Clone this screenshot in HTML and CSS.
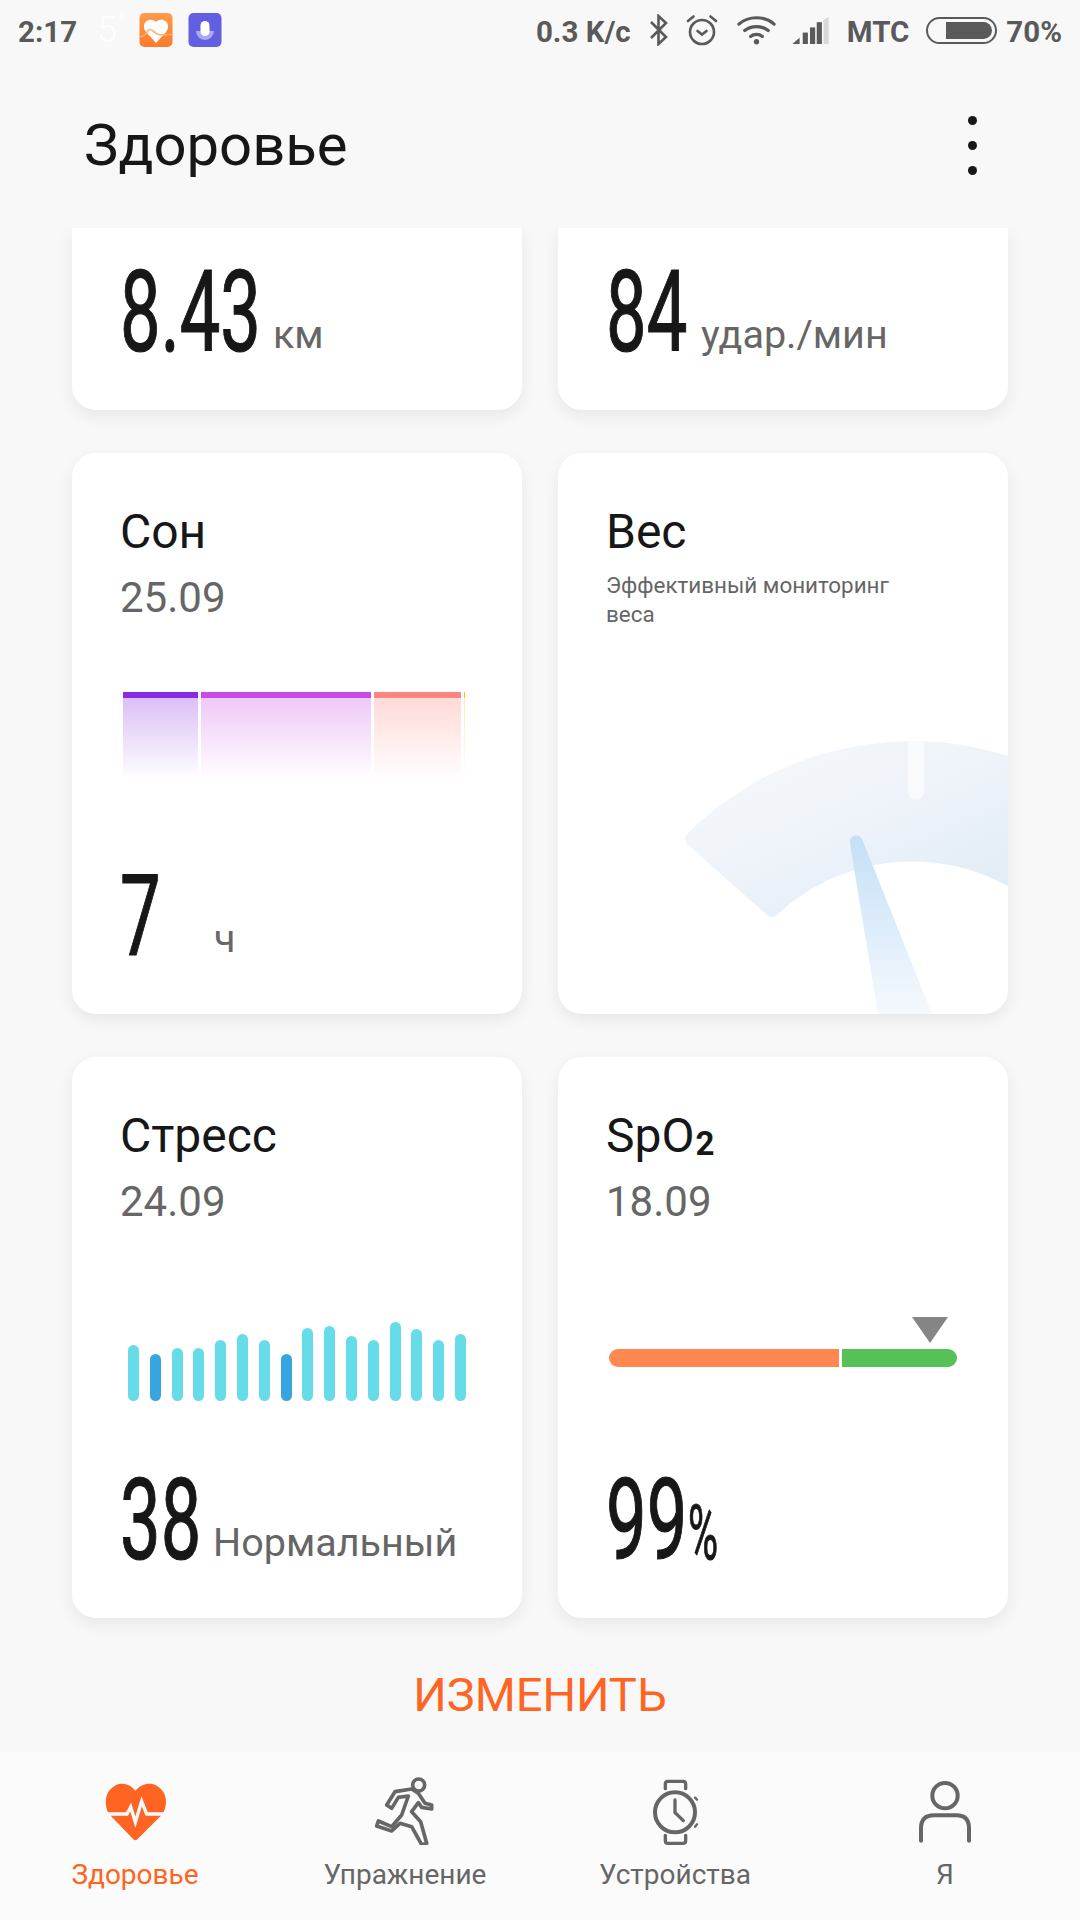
FILE: index.html
```html
<!DOCTYPE html>
<html lang="ru">
<head>
  <meta charset="UTF-8">
  <meta name="viewport" content="width=device-width, initial-scale=1.0">
  <title>Здоровье</title>
  <link rel="stylesheet" href="styles.css">
</head>
<body>
<div class="app">

  <!-- Status bar -->
  <div class="status-bar">
    <div class="status-left">
      <span class="status-text">2:17</span>
      <span class="status-weather">5<sup>°</sup></span>
      <svg class="app-icon first-icon" viewBox="0 0 33 34">
        <defs>
          <linearGradient id="appOrange" x1="0" y1="0" x2="0" y2="1">
            <stop offset="0" stop-color="#ff9a4d"/>
            <stop offset="1" stop-color="#ff7a2a"/>
          </linearGradient>
        </defs>
        <rect width="33" height="34" rx="5" fill="url(#appOrange)"/>
        <path d="M16.5 9C14 6 9 6 6.500 8.500C3.500 11.500 4 16 6.500 19L16.500 30L26.500 19C29 16 29.500 11.500 26.500 8.500C24 6 19 6 16.500 9Z" fill="#fff"/>
        <path d="M0 23C4 25 6 21 9 17C12 14 15 21 19 21.500C23 22 26 21.500 33 21.500" fill="none" stroke="#ffb070" stroke-width="1.500"/>
      </svg>
      <svg class="app-icon second-icon" viewBox="0 0 33 34">
        <rect width="33" height="34" rx="5" fill="#625fe0"/>
        <path d="M7.500 18A9 9 0 0 0 25.500 18Z" fill="#aca9f0"/>
        <rect x="12" y="8" width="9" height="15" rx="4.500" fill="#fff"/>
      </svg>
    </div>
    <div class="status-right">
      <span class="status-text">0.3 K/c</span>
      <svg class="bt-icon" viewBox="0 0 20 32" fill="none" stroke="#5a5a5a" stroke-width="2.600">
        <path d="M2 8L17 23L9.500 30V2L17 9L2 24"/>
      </svg>
      <svg class="alarm-icon" viewBox="0 0 32 32" fill="none" stroke="#5a5a5a" stroke-width="2.600" stroke-linecap="round">
        <circle cx="16" cy="18" r="12"/>
        <path d="M11.500 17L16 20.500L20.500 17"/>
        <path d="M2 7L7.500 2.500M30 7L24.500 2.500"/>
      </svg>
      <svg class="wifi-icon" viewBox="0 0 36 30" fill="none" stroke="#5a5a5a" stroke-width="3" stroke-linecap="round">
        <path d="M1.500 9.500C10.500 1.500 25.500 1.500 34.500 9.500"/>
        <path d="M7 15.500C13 10.500 23 10.500 29 15.500"/>
        <path d="M12.500 21C15.500 18.500 20.500 18.500 23.500 21"/>
        <circle cx="18" cy="26" r="2.500" fill="#5a5a5a" stroke="none"/>
      </svg>
      <svg class="signal-icon" viewBox="0 0 35 26">
        <path d="M0 26L7 20V26Z" fill="#5a5a5a"/>
        <rect x="10" y="15" width="5" height="11" fill="#5a5a5a"/>
        <rect x="17" y="10" width="5" height="16" fill="#5a5a5a"/>
        <rect x="23.500" y="5" width="5" height="21" fill="#5a5a5a"/>
        <path d="M30 3L35 0V26H30Z" fill="#d8d8d8"/>
      </svg>
      <span class="status-text carrier">МТС</span>
      <div class="battery"><div class="battery-fill"></div></div>
      <span class="status-text">70%</span>
    </div>
  </div>

  <!-- Header -->
  <div class="header">
    <h1>Здоровье</h1>
    <div class="more-button"><span></span><span></span><span></span></div>
  </div>

  <!-- Cards -->
  <div class="content">
    <div class="card-grid">

      <div class="card card-cut">
        <div class="value">
          <span class="num num-dist">8.43</span>
          <span class="unit">км</span>
        </div>
      </div>

      <div class="card card-cut">
        <div class="value">
          <span class="num num-pulse">84</span>
          <span class="unit">удар./мин</span>
        </div>
      </div>

      <div class="card">
        <div class="card-title">Сон</div>
        <div class="card-date">25.09</div>
        <div class="sleep-chart">
          <div class="sleep-part sleep-deep"></div>
          <div class="sleep-part sleep-light"></div>
          <div class="sleep-part sleep-rem"></div>
          <div class="sleep-part sleep-awake"></div>
        </div>
        <div class="value">
          <span class="num num-sleep">7</span>
          <span class="unit">ч</span>
        </div>
      </div>

      <div class="card">
        <div class="card-title">Вес</div>
        <div class="card-note">Эффективный мониторинг<br>веса</div>
        <svg class="gauge" viewBox="0 0 450 561">
          <defs>
            <linearGradient id="gaugeBand" x1="0.1" y1="0" x2="0.9" y2="0.8">
              <stop offset="0" stop-color="#f5f8fc"/>
              <stop offset="0.5" stop-color="#eef3f9"/>
              <stop offset="1" stop-color="#e1ecf5"/>
            </linearGradient>
            <linearGradient id="gaugeNeedle" x1="0" y1="0" x2="0" y2="1">
              <stop offset="0" stop-color="#c4dff7"/>
              <stop offset="1" stop-color="#f5f9fd"/>
            </linearGradient>
          </defs>
          <path d="M134 386A311 311 0 0 1 507.500 335.700L454.500 427.500A205 205 0 0 0 214 457Z" fill="url(#gaugeBand)" stroke="url(#gaugeBand)" stroke-width="14" stroke-linejoin="round"/>
          <path d="M350 287H366V339A8 8 0 0 1 350 339Z" fill="#fff" fill-opacity="0.55"/>
          <path d="M292 391A6.500 6.500 0 0 1 304.500 387L374 561H320Z" fill="url(#gaugeNeedle)"/>
        </svg>
      </div>

      <div class="card">
        <div class="card-title">Стресс</div>
        <div class="card-date">24.09</div>
        <div class="stress-chart">
          <div class="stress-bar" style="height:56px"></div>
          <div class="stress-bar stress-low" style="height:47px"></div>
          <div class="stress-bar" style="height:53px"></div>
          <div class="stress-bar" style="height:53px"></div>
          <div class="stress-bar" style="height:61px"></div>
          <div class="stress-bar" style="height:67px"></div>
          <div class="stress-bar" style="height:61px"></div>
          <div class="stress-bar stress-low" style="height:47px"></div>
          <div class="stress-bar" style="height:73px"></div>
          <div class="stress-bar" style="height:75px"></div>
          <div class="stress-bar" style="height:65px"></div>
          <div class="stress-bar" style="height:61px"></div>
          <div class="stress-bar" style="height:79px"></div>
          <div class="stress-bar" style="height:72px"></div>
          <div class="stress-bar" style="height:61px"></div>
          <div class="stress-bar" style="height:67px"></div>
        </div>
        <div class="value">
          <span class="num num-stress">38</span>
          <span class="unit">Нормальный</span>
        </div>
      </div>

      <div class="card">
        <div class="card-title">SpO<b class="sub-two">2</b></div>
        <div class="card-date">18.09</div>
        <div class="spo-chart">
          <div class="spo-marker"></div>
          <div class="spo-bar">
            <div class="spo-low"></div>
            <div class="spo-good"></div>
          </div>
        </div>
        <div class="value">
          <span class="num num-spo">99</span>
          <span class="num-percent">%</span>
        </div>
      </div>

    </div>

    <div class="edit-link">ИЗМЕНИТЬ</div>
  </div>

  <!-- Bottom navigation -->
  <div class="bottom-nav">
    <div class="nav-item active">
      <svg class="nav-icon" viewBox="285 165 210 210">
        <path d="M391 212C375 192 350 185 330 197C305 210 295 240 308 275L320 290L385 358Q391 364 397 358L467 288L478 272C490 240 480 210 455 197C435 185 408 192 391 212Z" fill="#ff6422"/>
        <path d="M300 282H366L377 261L391 307L410 244L425 282H486" fill="none" stroke="#fbfbfb" stroke-width="10"/>
      </svg>
      <span>Здоровье</span>
    </div>
    <div class="nav-item">
      <svg class="nav-icon" viewBox="1070 165 210 210" fill="none" stroke="#666" stroke-width="11" stroke-linejoin="round">
        <circle cx="1216" cy="195" r="18"/>
        <path d="M1195 207L1145 215L1120 255L1135 265L1155 232L1185 228L1165 285L1135 320L1095 303L1090 318L1135 333L1160 310L1195 320L1225 374L1240 370L1222 305L1195 275L1215 248L1225 262L1255 267L1255 255L1235 250L1215 220Z"/>
      </svg>
      <span>Упражнение</span>
    </div>
    <div class="nav-item">
      <svg class="nav-icon" viewBox="285 165 210 210" fill="none" stroke="#666" stroke-width="12" stroke-linecap="round" stroke-linejoin="round">
        <circle cx="390" cy="277" r="60"/>
        <path d="M390 240V278L415 302" stroke-width="10"/>
        <path d="M361 206V192Q361 184 369 184H414Q422 184 422 192V206" stroke-width="10"/>
        <path d="M361 346V362Q361 370 369 370H414Q422 370 422 362V346" stroke-width="10"/>
        <path d="M450 233L456 239M450 320L456 313" stroke-width="7"/>
      </svg>
      <span>Устройства</span>
    </div>
    <div class="nav-item">
      <svg class="nav-icon" viewBox="1071 165 210 210" fill="none" stroke="#666" stroke-width="12" stroke-linecap="round">
        <circle cx="1176" cy="227" r="38"/>
        <path d="M1104 362V325Q1104 286 1143 286H1210Q1248 286 1248 325V362"/>
      </svg>
      <span>Я</span>
    </div>
  </div>

</div>
</body>
</html>
```

FILE: styles.css
```css
/* Base */
* {
  box-sizing: border-box;
}

body {
  margin: 0;
  background-color: #f8f8f8;
  font-family: Roboto, "Noto Sans", sans-serif;
  color: #171717;
}

.app {
  width: 1080px;
  height: 1920px;
  display: flex;
  flex-direction: column;
  overflow: hidden;
}

/* Status bar */
.status-bar {
  height: 62px;
  flex-shrink: 0;
  display: flex;
  justify-content: space-between;
  align-items: center;
  padding: 0 18px 2px 18px;
}

.status-left,
.status-right {
  display: flex;
  align-items: center;
}

.status-text {
  padding-top: 4px;
  font-size: 29.500px;
  font-weight: 700;
  color: #5a5a5a;
  white-space: nowrap;
}

.status-weather {
  margin-left: 20px;
  font-size: 36px;
  font-weight: 300;
  color: #fff;
}

.status-weather sup {
  font-size: 20px;
}

.app-icon {
  width: 34px;
  height: 34px;
}

.first-icon {
  margin-left: 14px;
}

.second-icon {
  margin-left: 15px;
}

.bt-icon {
  width: 20px;
  height: 32px;
  margin-left: 18px;
}

.alarm-icon {
  width: 32px;
  height: 32px;
  margin-left: 17px;
}

.wifi-icon {
  width: 39px;
  height: 32px;
  margin-left: 19px;
}

.signal-icon {
  width: 37px;
  height: 27px;
  margin-left: 16px;
}

.carrier {
  margin-left: 18px;
}

.battery {
  width: 71px;
  height: 27px;
  margin: 0 9px 0 17px;
  padding: 3px;
  display: flex;
  justify-content: flex-end;
  border: 2px solid #5a5a5a;
  border-radius: 14px;
}

.battery-fill {
  width: 46px;
  background-color: #5a5a5a;
  border-radius: 0 9px 9px 0;
}

/* Header */
.header {
  height: 166px;
  flex-shrink: 0;
  display: flex;
  justify-content: space-between;
  align-items: center;
  padding: 0 103px 0 84px;
}

.header h1 {
  margin: 0;
  font-size: 58px;
  font-weight: 400;
}

.more-button {
  display: flex;
  flex-direction: column;
  gap: 16px;
}

.more-button span {
  width: 9px;
  height: 9px;
  background-color: #171717;
  border-radius: 50%;
}

/* Cards */
.content {
  flex: 1;
  min-height: 0;
  overflow: hidden;
}

.card-grid {
  display: grid;
  grid-template-columns: 450px 450px;
  grid-template-rows: 182px 561px 561px;
  gap: 43px 36px;
  padding: 0 72px;
}

.card {
  position: relative;
  display: flex;
  flex-direction: column;
  padding: 54px 48px 47px;
  background-color: #fff;
  border-radius: 24px;
  box-shadow: 0 6px 16px rgba(0, 0, 0, 0.07);
  overflow: hidden;
}

.card-cut {
  justify-content: flex-end;
  border-radius: 0 0 24px 24px;
}

.card-title {
  font-size: 48px;
  line-height: 50px;
}

.sub-two {
  margin-left: 1px;
  font-size: 33px;
  font-weight: 700;
  line-height: 0;
  vertical-align: -3px;
}

.card-date {
  margin-top: 19px;
  font-size: 42px;
  line-height: 44px;
  color: #666;
}

.card-note {
  margin-top: 14px;
  font-size: 22.400px;
  line-height: 29px;
  color: #666;
}

.value {
  margin-top: auto;
  display: flex;
  align-items: flex-end;
  height: 100px;
  white-space: nowrap;
}

.num {
  flex-shrink: 0;
  display: inline-block;
  font-size: 113px;
  font-weight: 400;
  line-height: 100px;
  -webkit-text-stroke: 1.200px #171717;
  transform: scaleX(0.64);
  transform-origin: left;
}

.num-dist {
  width: 153px;
}

.num-pulse {
  width: 95px;
}

.num-sleep {
  width: 94px;
}

.num-stress {
  width: 93px;
}

.num-spo {
  width: 82px;
}

.num-percent {
  display: inline-block;
  font-size: 76px;
  font-weight: 400;
  line-height: 76px;
  -webkit-text-stroke: 1px #171717;
  transform: scaleX(0.54);
  transform-origin: left;
}

.unit {
  margin-bottom: 4px;
  font-size: 39.500px;
  line-height: 48px;
  color: #666;
}

/* Sleep chart */
.sleep-chart {
  display: flex;
  gap: 3px;
  height: 88px;
  margin-top: 72px;
  margin-left: 3px;
}

.sleep-part {
  border-top: 6px solid;
}

.sleep-deep {
  width: 75px;
  border-color: #8a2be2;
  background: linear-gradient(rgba(138, 43, 226, 0.3), rgba(138, 43, 226, 0));
}

.sleep-light {
  width: 170px;
  border-color: #c94be6;
  background: linear-gradient(rgba(201, 75, 230, 0.3), rgba(201, 75, 230, 0));
}

.sleep-rem {
  width: 87px;
  border-color: #ff8580;
  background: linear-gradient(rgba(255, 133, 128, 0.3), rgba(255, 133, 128, 0));
}

.sleep-awake {
  width: 1px;
  border-color: #ffc107;
  background: linear-gradient(rgba(255, 193, 7, 0.3), rgba(255, 193, 7, 0));
}

/* Weight gauge */
.gauge {
  position: absolute;
  top: 0;
  left: 0;
  width: 450px;
  height: 561px;
}

/* Stress chart */
.stress-chart {
  display: flex;
  align-items: flex-end;
  gap: 10.800px;
  height: 80px;
  margin-top: 97px;
  margin-left: 8px;
}

.stress-bar {
  width: 11px;
  background-color: #66dce8;
  border-radius: 6px;
}

.stress-low {
  background-color: #38a6de;
}

/* SpO2 chart */
.spo-chart {
  margin-top: 93px;
  margin-left: 3px;
  width: 348px;
}

.spo-marker {
  width: 0;
  height: 0;
  margin: 0 0 6px 303px;
  border-left: 18px solid transparent;
  border-right: 18px solid transparent;
  border-top: 26px solid #858585;
}

.spo-bar {
  display: flex;
  gap: 3px;
  height: 18px;
}

.spo-low {
  width: 230px;
  background-color: #ff8750;
  border-radius: 9px 0 0 9px;
}

.spo-good {
  flex: 1;
  background-color: #55c157;
  border-radius: 0 9px 9px 0;
}

/* Edit link */
.edit-link {
  margin-top: 48px;
  text-align: center;
  font-size: 47px;
  line-height: 58px;
  color: #ff6422;
}

/* Bottom navigation */
.bottom-nav {
  height: 168px;
  flex-shrink: 0;
  display: grid;
  grid-template-columns: repeat(4, 1fr);
  background-color: #fbfbfb;
}

.nav-item {
  display: flex;
  flex-direction: column;
  align-items: center;
  padding-top: 23px;
  font-size: 28px;
  color: #666;
}

.nav-item.active {
  color: #ff6422;
}

.nav-icon {
  width: 70px;
  height: 70px;
  margin-bottom: 13px;
}
```
